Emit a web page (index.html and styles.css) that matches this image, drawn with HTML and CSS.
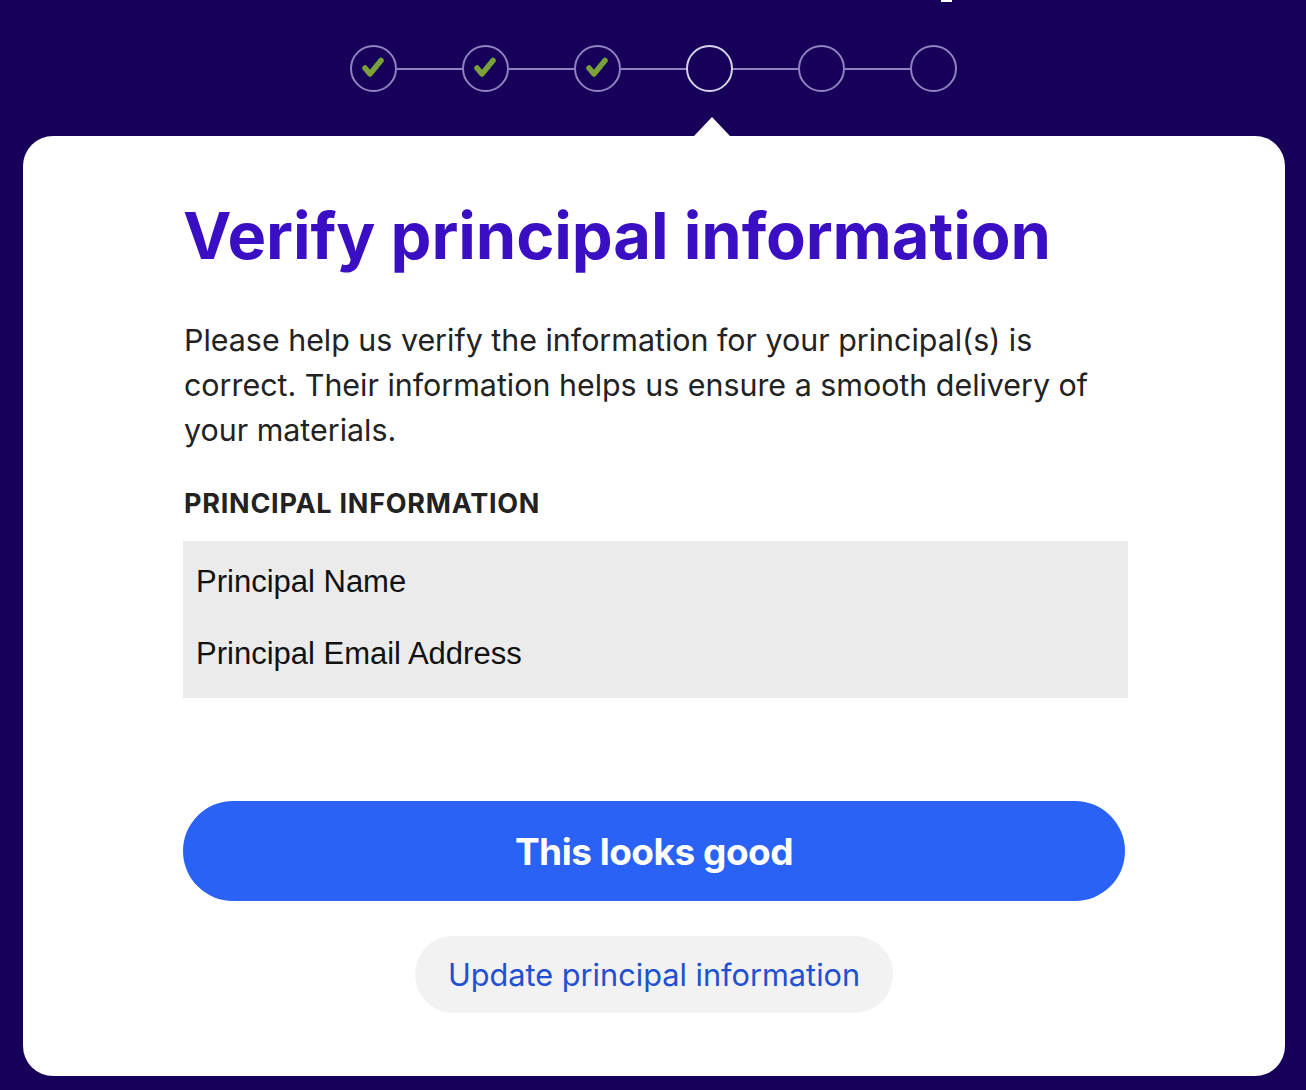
FILE: index.html
```html
<!DOCTYPE html>
<html lang="en">
<head>
<meta charset="utf-8">
<title>Verify principal information</title>
<link rel="stylesheet" href="styles.css">
</head>
<body>
<div class="page">
  <div class="top-strip"><span class="clip-mark"></span></div>
  <div class="stepper">
    <div class="step done"><svg viewBox="0 0 24 22" width="24" height="22"><path d="M4 11 L9 17 L20 3.5" fill="none" stroke="#7aa23a" stroke-width="5.5" stroke-linecap="round" stroke-linejoin="round"/></svg></div>
    <div class="link"></div>
    <div class="step done"><svg viewBox="0 0 24 22" width="24" height="22"><path d="M4 11 L9 17 L20 3.5" fill="none" stroke="#7aa23a" stroke-width="5.5" stroke-linecap="round" stroke-linejoin="round"/></svg></div>
    <div class="link"></div>
    <div class="step done"><svg viewBox="0 0 24 22" width="24" height="22"><path d="M4 11 L9 17 L20 3.5" fill="none" stroke="#7aa23a" stroke-width="5.5" stroke-linecap="round" stroke-linejoin="round"/></svg></div>
    <div class="link"></div>
    <div class="step current"></div>
    <div class="link"></div>
    <div class="step"></div>
    <div class="link"></div>
    <div class="step"></div>
  </div>
  <div class="pointer-row"><span class="pointer"></span></div>
  <main class="card">
    <h1 class="title">Verify principal information</h1>
    <p class="intro">Please help us verify the information for your principal(s) is correct. Their information helps us ensure a smooth delivery of your materials.</p>
    <h2 class="label">PRINCIPAL INFORMATION</h2>
    <div class="info-box">
      <div class="info-line">Principal Name</div>
      <div class="info-line">Principal Email Address</div>
    </div>
    <button class="btn-primary" type="button">This looks good</button>
    <div class="secondary-row">
      <button class="btn-secondary" type="button">Update principal information</button>
    </div>
  </main>
</div>
</body>
</html>
```
FILE: styles.css
```css
html, body {
  margin: 0;
  padding: 0;
}
body {
  background: #17005a;
  width: 1306px;
  height: 1090px;
  overflow: hidden;
  font-family: Inter, "Liberation Sans", sans-serif;
}
.page {
  display: flex;
  flex-direction: column;
}
.top-strip {
  height: 3px;
  display: flex;
}
.clip-mark {
  display: block;
  width: 11px;
  height: 2px;
  margin-left: 941px;
  background: #ffffff;
}
.stepper {
  margin-top: 42px;
  height: 47px;
  display: flex;
  align-items: center;
  padding-left: 350px;
}
.step {
  box-sizing: border-box;
  width: 47px;
  height: 47px;
  border-radius: 50%;
  border: 2px solid #8f83bf;
  display: flex;
  align-items: center;
  justify-content: center;
  flex: none;
}
.step svg {
  display: block;
  margin-left: -1px;
  margin-top: -2px;
}
.step.current {
  border-color: #d8d4e8;
}
.link {
  width: 65px;
  height: 2px;
  background: #8f83bf;
  flex: none;
}
.pointer-row {
  margin-top: 25px;
  height: 19px;
  display: flex;
}
.pointer {
  display: block;
  margin-left: 694px;
  width: 0;
  height: 0;
  border-left: 18px solid transparent;
  border-right: 18px solid transparent;
  border-bottom: 19px solid #ffffff;
}
.card {
  margin-left: 23px;
  width: 1262px;
  height: 940px;
  box-sizing: border-box;
  background: #ffffff;
  border-radius: 30px;
  padding: 61px 157px 0 160px;
}
.title {
  margin: 0;
  font-size: 65px;
  line-height: 78px;
  font-weight: 700;
  color: #3a0ec2;
  letter-spacing: -0.1px;
  white-space: nowrap;
}
.intro {
  margin: 43px 0 0 1px;
  font-size: 30.4px;
  line-height: 45px;
  color: #222222;
  font-weight: 400;
}
.label {
  margin: 35px 0 0 1px;
  font-size: 27px;
  line-height: 32px;
  font-weight: 700;
  color: #222222;
  letter-spacing: 0.75px;
}
.info-box {
  margin-top: 21px;
  background: #ebebeb;
  padding: 5px 13px 8px;
  font-family: "Liberation Sans", Arial, sans-serif;
  font-size: 31px;
  color: #111111;
}
.info-line {
  line-height: 72px;
}
.btn-primary {
  display: block;
  margin-top: 103px;
  width: 942px;
  height: 100px;
  border: none;
  border-radius: 50px;
  background: #2962f4;
  color: #ffffff;
  font-family: Inter, "Liberation Sans", sans-serif;
  font-size: 37px;
  font-weight: 700;
  letter-spacing: -0.5px;
  padding: 0;
}
.secondary-row {
  margin-top: 35px;
  display: flex;
  justify-content: center;
  padding-right: 3px;
}
.btn-secondary {
  height: 77px;
  padding: 0 33px;
  border: none;
  border-radius: 38px;
  background: #f2f2f2;
  color: #2150d0;
  font-family: Inter, "Liberation Sans", sans-serif;
  font-size: 30.7px;
  font-weight: 400;
}
```
